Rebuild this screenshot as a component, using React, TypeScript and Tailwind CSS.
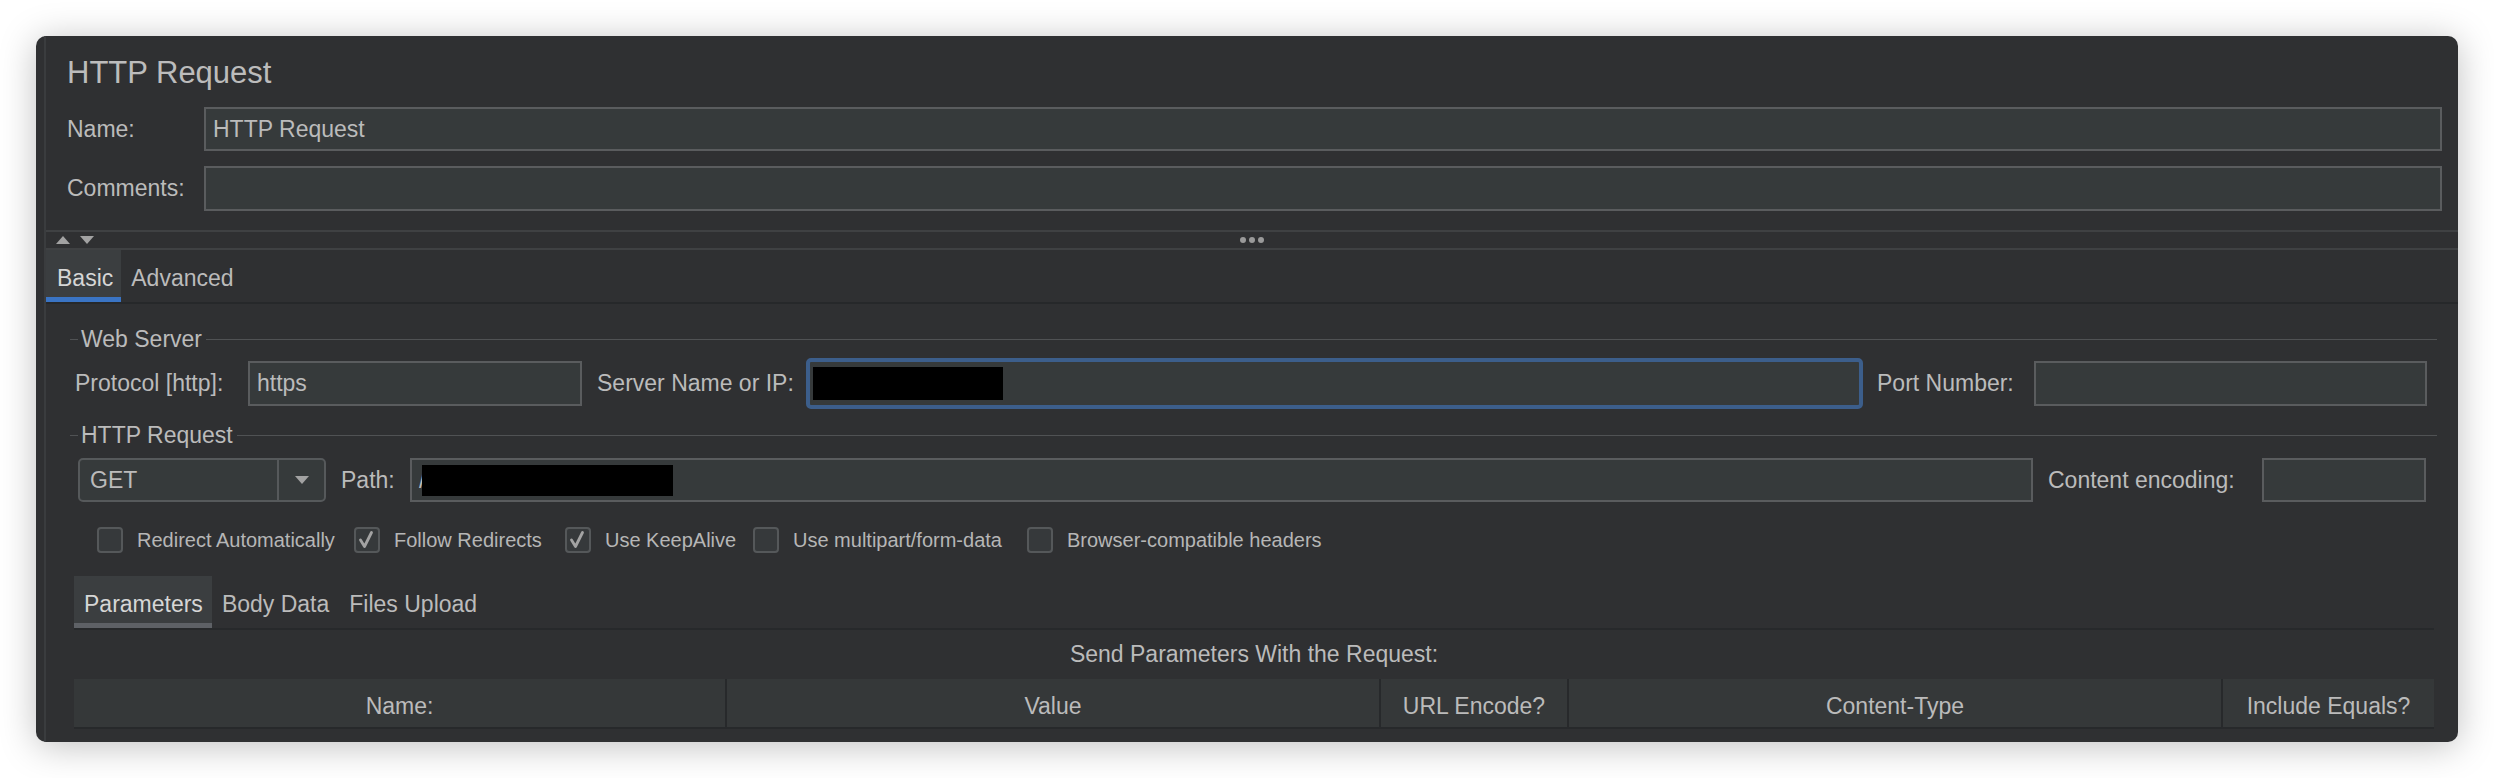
import React from 'react';

type Kids = { children?: React.ReactNode; className?: string };

function Field({ children, className = '' }: Kids) {
  return (
    <div className={`flex h-full items-center border-2 border-[#5a5c5e] bg-[#363a3b] pl-[7px] text-[#bbbbbb] ${className}`}>
      {children}
    </div>
  );
}

function GroupTitle({ title }: { title: string }) {
  return (
    <div className="flex h-[28px] items-center">
      <div className="h-px w-[8px] bg-[#505254]" />
      <span className="pl-[3px] pr-[4px] leading-[28px]">{title}</span>
      <div className="h-px flex-1 bg-[#505254]" />
    </div>
  );
}

function Check({ label, checked, className = '' }: { label: string; checked?: boolean; className?: string }) {
  return (
    <div className={`flex items-center ${className}`}>
      <div className="flex h-[26px] w-[26px] items-center justify-center rounded-[4px] border-2 border-[#55585a] bg-[#36393b]">
        {checked && (
          <svg width="22" height="22" viewBox="0 0 22 22">
            <polyline points="4.5,11 8.5,17.5 15.5,3.5" fill="none" stroke="#a3a3a3" strokeWidth="2.8" strokeLinecap="round" strokeLinejoin="round" />
          </svg>
        )}
      </div>
      <span className="ml-[14px] text-[20px] text-[#b6b6b6]">{label}</span>
    </div>
  );
}

function Triangle({ up }: { up?: boolean }) {
  return (
    <svg width="14" height="8" viewBox="0 0 14 8">
      <polygon points={up ? '7,0 14,8 0,8' : '0,0 14,0 7,8'} fill="#a2a2a2" />
    </svg>
  );
}

export default function App() {
  const columns = ['Name:', 'Value', 'URL Encode?', 'Content-Type', 'Include Equals?'];

  return (
    <div className="min-h-[778px] w-full bg-white pl-[36px] pt-[36px] font-['Liberation_Sans',Arial,sans-serif] text-[23px] text-[#bbbbbb]">
      <div className="flex h-[706px] w-[2422px] overflow-hidden rounded-[10px] bg-[#2f3032] pl-[8px] shadow-[0_4px_36px_rgba(0,0,0,0.25)]">
        <div className="flex flex-1 flex-col border-l-2 border-[#3a3c3e]">
          {/* header: title, name, comments */}
          <div className="pl-[21px] pr-[16px]">
            <div className="mt-[19px] h-[36px] text-[31px] leading-[36px] text-[#bcbcbc]">HTTP Request</div>
            <div className="mt-[16px] grid h-[44px] grid-cols-[137px_1fr] items-center">
              <span>Name:</span>
              <Field>HTTP Request</Field>
            </div>
            <div className="mt-[15px] grid h-[45px] grid-cols-[137px_1fr] items-center">
              <span>Comments:</span>
              <Field />
            </div>
          </div>

          {/* split pane divider */}
          <div className="mt-[19px] flex h-[20px] items-center border-y-2 border-[#3f4143]">
            <div className="flex w-[60px] items-center gap-[10px] pl-[10px]">
              <Triangle up />
              <Triangle />
            </div>
            <div className="flex flex-1 items-center justify-center gap-[3px]">
              <div className="h-[6px] w-[6px] rounded-full bg-[#9a9a9a]" />
              <div className="h-[6px] w-[6px] rounded-full bg-[#9a9a9a]" />
              <div className="h-[6px] w-[6px] rounded-full bg-[#9a9a9a]" />
            </div>
            <div className="w-[60px]" />
          </div>

          {/* Basic / Advanced tabs */}
          <div className="flex h-[54px] border-b-2 border-[#26282a]">
            <div className="flex h-full items-center border-b-[5px] border-[#3a74c4] bg-[#3b3e40] pl-[11px] pr-[8px] pt-[9px] text-[#d6d6d6]">
              Basic
            </div>
            <div className="flex h-full items-center pb-[5px] pl-[10px] pt-[9px]">Advanced</div>
          </div>

          {/* Basic panel */}
          <div className="pl-[24px] pr-[21px]">
            <div className="mt-[21px]">
              <GroupTitle title="Web Server" />
            </div>
            <div className="mt-[8px] flex h-[45px] items-center pl-[5px] pr-[10px]">
              <span className="w-[173px] shrink-0">Protocol [http]:</span>
              <Field className="w-[334px] shrink-0">https</Field>
              <span className="ml-[15px] w-[209px] shrink-0">Server Name or IP:</span>
              <div className="flex h-[51px] flex-1 items-center rounded-[5px] border-4 border-[#3c5e8b] bg-[#363a3b] pl-[3px]">
                <div className="h-[33px] w-[190px] bg-black" />
              </div>
              <span className="ml-[14px] w-[157px] shrink-0">Port Number:</span>
              <Field className="w-[393px] shrink-0" />
            </div>

            <div className="mt-[15px]">
              <GroupTitle title="HTTP Request" />
            </div>
            <div className="mt-[9px] flex h-[44px] items-center pl-[8px] pr-[11px]">
              <div className="flex h-full w-[248px] shrink-0 rounded-[5px] border-2 border-[#56595b] bg-[#363a3b]">
                <div className="flex flex-1 items-center pl-[10px]">GET</div>
                <div className="flex w-[47px] items-center justify-center border-l-2 border-[#56595b]">
                  <Triangle />
                </div>
              </div>
              <span className="ml-[15px] w-[69px] shrink-0">Path:</span>
              <Field className="flex-1 pl-[4px]">
                <span>/</span>
                <div className="-ml-[3px] h-[31px] w-[251px] bg-black" />
              </Field>
              <span className="ml-[15px] w-[214px] shrink-0">Content encoding:</span>
              <Field className="w-[164px] shrink-0" />
            </div>

            <div className="mt-[25px] flex h-[26px] items-center pl-[27px]">
              <Check className="w-[257px]" label="Redirect Automatically" />
              <Check className="w-[211px]" label="Follow Redirects" checked />
              <Check className="w-[188px]" label="Use KeepAlive" checked />
              <Check className="w-[274px]" label="Use multipart/form-data" />
              <Check label="Browser-compatible headers" />
            </div>

            {/* Parameters / Body Data / Files Upload */}
            <div className="pl-[4px] pr-[3px]">
              <div className="mt-[23px] flex h-[54px] border-b-2 border-[#27292b]">
                <div className="flex h-full items-center border-b-[5px] border-[#5e6166] bg-[#3b3e40] pl-[10px] pr-[9px] pt-[10px] text-[#d6d6d6]">
                  Parameters
                </div>
                <div className="flex h-full items-center px-[10px] pb-[5px] pt-[10px]">Body Data</div>
                <div className="flex h-full items-center px-[10px] pb-[5px] pt-[10px]">Files Upload</div>
              </div>
              <div className="mt-[10px] flex h-[28px] items-center justify-center">Send Parameters With the Request:</div>
              <div className="mt-[11px] grid h-[50px] grid-cols-[653px_654px_188px_654px_1fr] border-b-2 border-[#27292b] bg-[#353839]">
                {columns.map((c, i) => (
                  <div
                    key={c}
                    className={`flex items-center justify-center pt-[6px] ${i < 4 ? 'border-r-2 border-[#27292b]' : ''}`}
                  >
                    {c}
                  </div>
                ))}
              </div>
            </div>
          </div>
        </div>
      </div>
    </div>
  );
}
